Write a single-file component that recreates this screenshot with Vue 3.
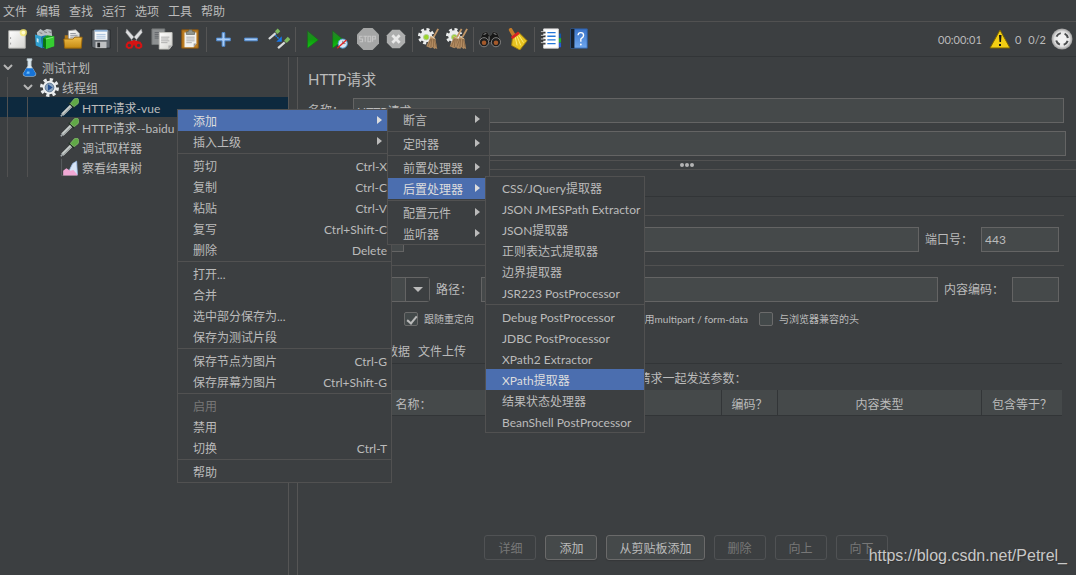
<script setup>
import { ref } from 'vue'

const menus = ['文件', '编辑', '查找', '运行', '选项', '工具', '帮助']

const tools = [
  [['new', '新建'], ['templates', '模板'], ['open', '打开'], ['save', '保存']],
  [['cut', '剪切'], ['copy', '复制'], ['paste', '粘贴']],
  [['plus', '展开'], ['minus', '收起'], ['toggle', '切换']],
  [['start', '启动'], ['start-now', '不停顿启动'], ['stop', '停止'], ['shutdown', '关闭']],
  [['clear', '清除'], ['clear-all', '清除全部']],
  [['search', '查找'], ['reset', '重置查找']],
  [['functions', '函数助手'], ['help', '帮助']],
]

const tree = [
  { label: '测试计划', icon: 'flask', level: 0, open: true },
  { label: '线程组', icon: 'gear', level: 1, open: true },
  { label: 'HTTP请求-vue', icon: 'dropper', level: 2, selected: true },
  { label: 'HTTP请求--baidu', icon: 'dropper', level: 2 },
  { label: '调试取样器', icon: 'dropper', level: 2 },
  { label: '察看结果树', icon: 'chart', level: 2 },
]

const popups = [
  {
    name: 'context',
    groups: [
      [{ label: '添加', sub: true, active: true }, { label: '插入上级', sub: true }],
      [
        { label: '剪切', key: 'Ctrl-X' },
        { label: '复制', key: 'Ctrl-C' },
        { label: '粘贴', key: 'Ctrl-V' },
        { label: '复写', key: 'Ctrl+Shift-C' },
        { label: '删除', key: 'Delete' },
      ],
      [{ label: '打开...' }, { label: '合并' }, { label: '选中部分保存为...' }, { label: '保存为测试片段' }],
      [{ label: '保存节点为图片', key: 'Ctrl-G' }, { label: '保存屏幕为图片', key: 'Ctrl+Shift-G' }],
      [{ label: '启用', disabled: true }, { label: '禁用' }, { label: '切换', key: 'Ctrl-T' }],
      [{ label: '帮助' }],
    ],
  },
  {
    name: 'add',
    groups: [
      [{ label: '断言', sub: true }],
      [{ label: '定时器', sub: true }],
      [{ label: '前置处理器', sub: true }, { label: '后置处理器', sub: true, active: true }],
      [{ label: '配置元件', sub: true }, { label: '监听器', sub: true }],
    ],
  },
  {
    name: 'post',
    groups: [
      [
        { label: 'CSS/JQuery提取器' },
        { label: 'JSON JMESPath Extractor' },
        { label: 'JSON提取器' },
        { label: '正则表达式提取器' },
        { label: '边界提取器' },
        { label: 'JSR223 PostProcessor' },
      ],
      [
        { label: 'Debug PostProcessor' },
        { label: 'JDBC PostProcessor' },
        { label: 'XPath2 Extractor' },
        { label: 'XPath提取器', active: true },
        { label: '结果状态处理器' },
        { label: 'BeanShell PostProcessor' },
      ],
    ],
  },
]

const actions = [
  { label: '详细', disabled: true },
  { label: '添加' },
  { label: '从剪贴板添加' },
  { label: '删除', disabled: true },
  { label: '向上', disabled: true },
  { label: '向下', disabled: true },
]

const name = ref('HTTP请求')
const port = ref('443')
</script>

<template>
  <div class="app">
    <svg class="defs" aria-hidden="true">
      <defs>
        <linearGradient id="paper" x1="0" y1="0" x2="1" y2="1"><stop offset="0" stop-color="#fff" /><stop offset="1" stop-color="#d4d4d0" /></linearGradient>
        <linearGradient id="gold" x1="0" y1="0" x2="0" y2="1"><stop offset="0" stop-color="#f0be4a" /><stop offset="1" stop-color="#c58a12" /></linearGradient>
        <linearGradient id="green" x1="0" y1="0" x2="0" y2="1"><stop offset="0" stop-color="#2f7d32" /><stop offset=".5" stop-color="#109a10" /><stop offset="1" stop-color="#12c812" /></linearGradient>
        <linearGradient id="blue" x1="0" y1="0" x2="0" y2="1"><stop offset="0" stop-color="#3a73c8" /><stop offset="1" stop-color="#6fa8f0" /></linearGradient>
        <radialGradient id="ball"><stop offset="0" stop-color="#fff" /><stop offset=".7" stop-color="#e4e4e4" /><stop offset="1" stop-color="#9a9a9a" /></radialGradient>
        <symbol id="i-new" viewBox="0 0 24 24">
          <path d="M3 3h18v19H3z" fill="url(#paper)" stroke="#b5b5b0" />
          <path d="M5 10v2M5 16v2" stroke="#999" />
          <circle cx="19" cy="5" r="4" fill="#f7e96a" opacity=".75" /><circle cx="19" cy="5" r="2" fill="#fffbd0" />
        </symbol>
        <symbol id="i-templates" viewBox="0 0 24 24">
          <path d="M3 5l4-4 3 2 4-2 5 1 1 8H4z" fill="#b9bfc2" /><path d="M6 5l3 1M11 4l3 1M16 4l3 1" stroke="#777" />
          <path d="M1 7l7 2 1 13-7-3z" fill="#2f9fd0" /><path d="M8 9l5-1v13l-4 1z" fill="#1674a8" />
          <path d="M3 11l2 1v4l-2-1z" fill="#c5e8f5" />
          <path d="M10 11l4-3 8 1v11l-9 3-3-3z" fill="#159c1f" /><path d="M13 11l9-2v11l-9 3z" fill="#35cd31" /><path d="M10 11l3 1v11l-3-3z" fill="#08720f" />
          <path d="M13 12l8-2" stroke="#87e97e" />
        </symbol>
        <symbol id="i-open" viewBox="0 0 24 24">
          <path d="M3 8h6l2 2h10v9H3z" fill="#b37a18" />
          <path d="M7 3l8-1 4 4v8H7z" fill="url(#paper)" stroke="#999" /><path d="M9 6h6M9 8h8M9 10h8" stroke="#8d9299" />
          <path d="M2 12h10l2-2h8l-1 12H3z" fill="url(#gold)" stroke="#98650b" />
        </symbol>
        <symbol id="i-save" viewBox="0 0 24 24">
          <path d="M3 2h19v20H4l-2-2V2z" fill="#646a70" stroke="#25282b" />
          <path d="M5 2h14v11H5z" fill="#f5f8fa" /><path d="M5 2h14v2H5z" fill="#8eb2d8" /><path d="M7 7h10M7 9h10M7 11h10" stroke="#a4c0dc" />
          <path d="M6 15h12v7H6z" fill="#bfc1c3" /><path d="M8 16h3v5H8z" fill="#25282b" />
        </symbol>
        <symbol id="i-cut" viewBox="0 0 24 24">
          <path d="M4 1l11 12-3 3L3 5zM20 1L9 13l3 3 9-11z" fill="#dedfe0" stroke="#8c8f91" stroke-width=".6" />
          <path d="M12 13l-2 1-5 1-2 3 0 3 3 2 4-1 2-4 2 4 4 1 3-2 0-3-2-3-5-1z" fill="#d51313" />
          <circle cx="7" cy="19" r="1.800" fill="#3c3f41" /><circle cx="17" cy="19" r="1.800" fill="#3c3f41" />
        </symbol>
        <symbol id="i-copy" viewBox="0 0 24 24">
          <path d="M1 1h14v17H1z" fill="#8d9091" stroke="#737677" /><path d="M4 5h8M4 7h8M4 9h8M4 11h8" stroke="#62666a" />
          <path d="M9 5h14v14l-3 4H9z" fill="url(#paper)" stroke="#c4c4c0" /><path d="M11 10h9M11 12h8M11 14h9M11 16h7" stroke="#aaa" /><path d="M23 19h-4v4" fill="#aaa" />
        </symbol>
        <symbol id="i-paste" viewBox="0 0 24 24">
          <path d="M3 2h18v20H3z" fill="#bc7c20" stroke="#875410" />
          <path d="M6 5h13v12l-3 4H6z" fill="#f1f1ee" /><path d="M8 10h9M8 12h9M8 14h9M8 16h6" stroke="#aaa" /><path d="M19 17h-3v4" fill="#999" />
          <path d="M8 4h2l1-2h3l1 2h2v3H8z" fill="#92978f" stroke="#585c55" stroke-width=".7" />
        </symbol>
        <symbol id="i-plus" viewBox="0 0 24 24"><path d="M11 5h3v6h6v3h-6v6h-3v-6H5v-3h6z" fill="#a9ccf5" stroke="#4b88d0" /></symbol>
        <symbol id="i-minus" viewBox="0 0 24 24"><path d="M5 11h14v3H5z" fill="#a9ccf5" stroke="#4b88d0" /></symbol>
        <symbol id="i-toggle" viewBox="0 0 24 24">
          <path d="M1 12l8-7M11 22l8-7" stroke="#d7dada" stroke-width="2.500" /><path d="M7 4l3 3M17 14l3 3" stroke="#303435" />
          <path d="M9 5l3-3M19 15l4-4" stroke="#7cba5e" stroke-width="4" />
          <path d="M8 8l6 6" stroke="#1983ee" stroke-width="1.500" stroke-dasharray="2 1" /><path d="M15 9v6H9z" fill="#1777eb" />
        </symbol>
        <symbol id="i-start" viewBox="0 0 24 24"><path d="M7 3l12 10-12 9z" fill="url(#green)" stroke="#17671b" stroke-width=".7" /></symbol>
        <symbol id="i-start-now" viewBox="0 0 24 24">
          <path d="M4 3l12 10-12 9z" fill="url(#green)" stroke="#17671b" stroke-width=".7" />
          <circle cx="15" cy="17" r="5" fill="#d7e8f5" stroke="#4d9bd4" /><path d="M15 14v3h3" fill="none" stroke="#777" /><path d="M9 22l10-9" stroke="#e02525" stroke-width="1.500" />
        </symbol>
        <symbol id="i-stop" viewBox="0 0 24 24">
          <path d="M7 0h10l7 7v10l-7 7H7l-7-7V7z" fill="#a5a6a6" />
          <g fill="none" stroke="#c6c6c6" stroke-width="1.200"><path d="M6 9H3v3h3v3H3M7 9h4M9 9v6M12 9h3v6h-3zM17 15V9h3v3h-3" /></g>
        </symbol>
        <symbol id="i-shutdown" viewBox="0 0 24 24"><path d="M8 2h8l6 6v8l-6 6H8l-6-6V8z" fill="#adaeae" /><path d="M8 8l8 8M16 8l-8 8" stroke="#e9e9e9" stroke-width="3" /></symbol>
        <symbol id="i-gear" viewBox="0 0 24 24">
          <circle cx="12" cy="12" r="10" fill="none" stroke="#e8eaeb" stroke-width="4" stroke-dasharray="4 3.85" />
          <circle cx="12" cy="12" r="8.5" fill="#eef0f1" /><circle cx="12" cy="12" r="5.5" fill="#8ca4bd" stroke="#4c6787" /><path d="M10 8l6 4-6 4z" fill="#254f91" />
        </symbol>
        <symbol id="sweeper" viewBox="0 0 24 24">
          <path d="M22 1l-5 9" stroke="#c19667" stroke-width="2" /><path d="M14 9l5 3 2 11-2-1-1 1-2-2-2 1-5-2z" fill="#b28b61" />
          <path d="M14 12l-3 8M15 12l-1 9M17 12v9M18 12l2 9" stroke="#735536" stroke-width=".6" /><path d="M13 9l6 3" stroke="#e2be8d" />
        </symbol>
        <symbol id="cog" viewBox="0 0 24 24">
          <circle cx="9" cy="9" r="7.5" fill="none" stroke="#eceeee" stroke-width="3" stroke-dasharray="3.300 2.590" /><circle cx="9" cy="9" r="6.5" fill="#eceeee" /><circle cx="9" cy="10" r="3" fill="#9ad62c" stroke="#b5c8a0" />
        </symbol>
        <symbol id="i-clear" viewBox="0 0 24 24"><use href="#cog" /><use href="#sweeper" /></symbol>
        <symbol id="i-clear-all" viewBox="0 0 24 24"><use href="#cog" /><use href="#sweeper" x="-5" width="24" height="24" /><use href="#sweeper" x="1" width="24" height="24" /></symbol>
        <symbol id="i-search" viewBox="0 0 24 24">
          <path d="M4 5l5-1 2 4h2l2-4 5 1 4 10-5 5-5-4h-4l-5 4-5-5z" fill="#171717" stroke="#555" stroke-width=".7" /><path d="M5 7l3-1M16 6l3 1M11 9v5" stroke="#999" />
          <circle cx="5.500" cy="15.500" r="5" fill="#202020" stroke="#888" /><circle cx="18.500" cy="15.500" r="5" fill="#202020" stroke="#888" />
          <circle cx="5.500" cy="16" r="2.500" fill="#a65a2b" /><circle cx="18.500" cy="16" r="2.500" fill="#a65a2b" />
        </symbol>
        <symbol id="i-reset" viewBox="0 0 24 24">
          <path d="M4 2l4 7" stroke="#c47b2a" stroke-width="4" stroke-linecap="round" /><path d="M6 10l7-5 9 9-8 10-9-5z" fill="#e7c320" stroke="#9e7d0c" />
          <path d="M9 10l2 9M11 9l4 10M13 8l5 8" stroke="#fff07c" /><path d="M5 11l8-6" stroke="#d62424" stroke-width="3" />
        </symbol>
        <symbol id="i-functions" viewBox="0 0 24 24">
          <path d="M18 6h5v5h-5z" fill="#1557a3" /><path d="M18 11h5v5h-5z" fill="#21ad32" /><path d="M18 16h5v5h-5z" fill="#235cd5" />
          <path d="M4 1h16v21H4z" fill="#fff" stroke="#ddd" /><path d="M8 5h9M8 9h9M8 13h9M8 17h9" stroke="#2376d9" stroke-width="1.4" />
          <path d="M1 5h5M1 9h5M1 13h5M1 17h5" stroke="#333" stroke-width="2" /><path d="M1 4h4M1 8h4M1 12h4M1 16h4" stroke="#ccc" />
        </symbol>
        <symbol id="i-help" viewBox="0 0 24 24">
          <path d="M3 1h18v21H3z" fill="url(#blue)" stroke="#2e5fa5" /><path d="M3 1h4v21H3z" fill="#17202c" />
          <path d="M11 8q0-3 3-3t3 3q0 2-2 3l-1 1v3" fill="none" stroke="#fff" stroke-width="1.5" /><circle cx="14" cy="18" r="1" fill="#fff" />
        </symbol>
        <symbol id="i-flask" viewBox="0 0 24 24">
          <path d="M9 1h6v2l-1 1v6l6 10q0 3-3 3H7q-3 0-3-3l6-10V4L9 3z" fill="#dce7ed" stroke="#b9c7cf" /><path d="M8 13h8l4 7q0 2-3 3H7q-3-1-3-3z" fill="#1773d6" /><path d="M9 17h3v3H8z" fill="#6dbbfa" />
        </symbol>
        <symbol id="i-dropper" viewBox="0 0 24 24">
          <path d="M3 21L15 9" stroke="#c9cfcd" stroke-width="4" /><path d="M4 21L15 10" stroke="#8d9593" stroke-width="1.200" /><path d="M1 23l3-3" stroke="#a5acae" stroke-width="2" />
          <path d="M11 6l7 7" stroke="#1f3021" stroke-width="1.500" /><path d="M13 7l5-6 4-1 2 3-1 4-5 4z" fill="#60a947" stroke="#9ad17d" stroke-width=".7" />
        </symbol>
        <symbol id="i-chart" viewBox="0 0 24 24">
          <path d="M2 1v21h20" fill="none" stroke="#626567" /><path d="M12 15l4-8 5-3 1 17-9-1z" fill="#d8e5f7" stroke="#9dbfed" /><path d="M4 16l4-3 5 3 4-1 5 6v1H4z" fill="#f0a8d4" />
        </symbol>
      </defs>
    </svg>

    <nav class="menubar" aria-label="主菜单">
      <button v-for="m in menus" :key="m" type="button">{{ m }}</button>
    </nav>

    <header class="toolbar">
      <div v-for="(group, g) in tools" :key="g" class="tool-group">
        <button v-for="t in group" :key="t[0]" type="button" :aria-label="t[1]">
          <svg><use :href="'#i-' + t[0]" /></svg>
        </button>
      </div>
      <div class="status">
        <span>00:00:01</span>
        <svg class="warn" viewBox="0 0 22 20">
          <path d="M11 1l10 18H1z" fill="#f4cf13" stroke="#7d6500" stroke-linejoin="round" /><path d="M10 6h2.500l-.5 7h-1.500zM10 15h2v2h-2z" fill="#151515" />
        </svg>
        <span class="errors">0</span>
        <span class="threads">0/2</span>
        <svg class="wheel" viewBox="0 0 22 22">
          <circle cx="11" cy="11" r="10.500" fill="url(#ball)" /><circle cx="11" cy="11" r="6" fill="none" stroke="#4b4d4e" stroke-width="2" stroke-dasharray="5.400 4.025" stroke-dashoffset="-2" /><circle cx="11" cy="11" r="4" fill="#f2f2f2" />
        </svg>
      </div>
    </header>

    <div class="body">
      <aside class="tree">
        <ul>
          <li v-for="n in tree" :key="n.label" :class="['level' + n.level, { selected: n.selected }]">
            <i v-for="l in n.level" :key="l" class="guide"></i>
            <svg v-if="n.open" class="chevron" viewBox="0 0 10 6"><path d="M1 1l4 4 4-4" /></svg>
            <svg class="node"><use :href="'#i-' + n.icon" /></svg>
            <span>{{ n.label }}</span>
          </li>
        </ul>
      </aside>

      <main class="main">
        <h1>HTTP请求</h1>
        <div class="row name-row"><label for="name">名称：</label><input id="name" v-model="name" class="grow" type="text" /></div>
        <div class="row note-row"><label for="note">注释：</label><input id="note" class="grow" type="text" /></div>
        <div class="splitter"><i></i><i></i><i></i></div>
        <div class="tabs"><button type="button">基本</button><button type="button">高级</button></div>

        <section class="form">
          <h2>Web服务器</h2>
          <div class="row">
            <label for="protocol">协议：</label><input id="protocol" class="protocol" type="text" />
            <label for="server">服务器名称或IP：</label><input id="server" class="grow" type="text" />
            <label for="port" class="after">端口号：</label><input id="port" v-model="port" class="port" type="text" />
          </div>
          <h2>HTTP请求</h2>
          <div class="row">
            <span class="combo"><select id="method" aria-label="方法"><option>GET</option><option>POST</option></select></span>
            <label for="path" class="path">路径：</label><input id="path" class="grow" type="text" />
            <label for="encoding" class="after">内容编码：</label><input id="encoding" class="encoding" type="text" />
          </div>
          <div class="checks">
            <label><input type="checkbox" />自动重定向</label>
            <label><input type="checkbox" checked />跟随重定向</label>
            <label><input type="checkbox" checked />KeepAlive</label>
            <label class="end"><input type="checkbox" />对POST使用multipart / form-data</label>
            <label><input type="checkbox" />与浏览器兼容的头</label>
          </div>
        </section>

        <div class="tabs body-tabs"><button type="button">参数</button><button type="button">消息体数据</button><button type="button">文件上传</button></div>
        <div class="params">
          <p>同请求一起发送参数：</p>
          <table>
            <colgroup><col class="c-name" /><col /><col class="c-enc" /><col class="c-type" /><col class="c-eq" /></colgroup>
            <thead><tr><th>名称：</th><th>值</th><th>编码？</th><th>内容类型</th><th>包含等于？</th></tr></thead>
          </table>
        </div>
        <footer><button v-for="a in actions" :key="a.label" type="button" :disabled="a.disabled">{{ a.label }}</button></footer>
      </main>
    </div>

    <div v-for="p in popups" :key="p.name" :class="['popup', p.name]" role="menu">
      <div v-for="(g, i) in p.groups" :key="i" class="popup-group">
        <button v-for="item in g" :key="item.label" type="button" role="menuitem" :disabled="item.disabled" :class="{ active: item.active }">
          <span>{{ item.label }}</span>
          <kbd v-if="item.key">{{ item.key }}</kbd>
          <i v-if="item.sub" class="arrow"></i>
        </button>
      </div>
    </div>
    <div class="watermark">https://blog.csdn.net/Petrel_</div>
  </div>
</template>

<style>
body { margin: 0; background: #3c3f41; }
</style>

<style scoped>
.app {
  position: relative;
  display: flex;
  flex-direction: column;
  min-height: 100vh;
  overflow: hidden;
  background: #3c3f41;
  color: #bbb;
  font: 12px/20px Lato, "Noto Sans CJK SC", sans-serif;
}
.app * { box-sizing: border-box; }
button, input, select, kbd { font: inherit; color: inherit; }
button { padding: 0; border: 0; background: none; white-space: nowrap; }
label, span { white-space: nowrap; }
.defs { position: absolute; width: 0; height: 0; }

.menubar { display: flex; gap: 9px; height: 22px; padding: 2px 3px 0; border-bottom: 1px solid #515151; }
.toolbar { display: flex; align-items: center; height: 35px; padding-left: 3px; border-bottom: 1px solid #323537; }
.tool-group { display: flex; }
.tool-group + .tool-group { margin-left: 2px; padding-left: 2px; border-left: 1px solid #555; }
.tool-group button { display: flex; align-items: center; justify-content: center; width: 28px; height: 25px; }
.tool-group svg { width: 22px; height: 22px; }
.status { display: flex; align-items: center; margin-left: auto; padding-right: 3px; font-size: 11px; }
.status span { padding-top: 2px; }
.warn { width: 22px; height: 20px; margin-left: 7px; }
.errors { margin-left: 4px; }
.threads { margin-left: 7px; }
.wheel { width: 22px; height: 22px; margin-left: 5px; }

.body { display: flex; flex: 1; }
.tree { flex: none; width: 289px; border-right: 1px solid #555; }
.tree ul { margin: 0; padding: 0; list-style: none; }
.tree li { position: relative; display: flex; align-items: center; height: 20px; padding-left: 20px; }
.tree li.level1 { padding-left: 40px; }
.tree li.level2 { padding-left: 60px; }
.tree li.selected { background: #0d293e; }
.tree li span { padding-top: 3px; }
.guide { position: absolute; top: 0; bottom: 0; left: 7px; width: 1px; background: #515151; }
.guide + .guide { left: 27px; }
.chevron { position: absolute; left: 3px; top: 7px; width: 10px; height: 6px; fill: none; stroke: #b5b5b5; stroke-width: 2; }
.level1 .chevron { left: 23px; }
.node { flex: none; width: 19px; height: 19px; margin-right: 3px; }

.main { display: flex; flex: 1; flex-direction: column; min-width: 0; margin-left: 8px; border-left: 1px solid #555; }
h1 { margin: 0; height: 41px; padding-left: 10px; font-size: 15px; font-weight: 400; line-height: 44px; }
.row { display: flex; align-items: center; height: 25px; }
.row label { padding-top: 1px; }
.name-row, .note-row { padding: 0 12px 0 10px; }
.name-row label, .note-row label { width: 45px; }
.note-row { margin-top: 8px; padding-right: 10px; }
input[type="text"] { height: 25px; min-width: 0; padding: 0 3px; border: 1px solid #646464; background: #45494a; outline: 0; }
.grow { flex: 1; }
.splitter { display: flex; align-items: center; justify-content: center; gap: 1px; height: 10px; margin-top: 4px; border-top: 1px solid #515151; border-bottom: 1px solid #515151; }
.splitter i { width: 4px; height: 4px; border-radius: 50%; background: #b4b4b4; }
.tabs { display: flex; gap: 8px; height: 27px; padding-left: 8px; border-bottom: 1px solid #323537; }
.form { padding: 8px 17px 0 6px; }
h2 { display: flex; align-items: center; gap: 4px; height: 20px; margin: 0 -5px 2px 0; font-size: 12px; font-weight: 400; }
h2::after { content: ""; flex: 1; height: 1px; background: #515151; }
h2:not(:first-child) { margin-top: 3px; }
.protocol { width: 64px; margin-right: 6px; }
.after { margin-left: 6px; margin-right: 8px; }
.port { width: 78px; }
.encoding { width: 47px; }
.combo { position: relative; width: 126px; height: 25px; }
.combo select { width: 100%; height: 25px; padding: 0 4px; appearance: none; border: 1px solid #646464; border-radius: 3px; background: #45494a; }
.combo::after { content: ""; position: absolute; top: 1px; right: 1px; width: 23px; height: 23px; border-left: 1px solid #646464; background: #3c3f41; pointer-events: none; }
.combo::before { content: ""; position: absolute; z-index: 1; top: 10px; right: 7px; border: 5px solid transparent; border-top-color: #bbb; border-bottom: 0; pointer-events: none; }
.path { width: 51px; padding-left: 6px; }
.checks { display: grid; grid-template-columns: 100px 94px 72px 178px auto; height: 34px; font-size: 10px; }
.checks label { display: flex; align-items: center; gap: 6px; }
.checks label.end { justify-content: flex-end; }
.checks label:last-child { padding-left: 11px; }
.checks input { position: relative; flex: none; width: 14px; height: 14px; margin: 0; appearance: none; border: 1px solid #6b6b6b; border-radius: 2px; background: #43494a; }
.checks input:checked::after { content: ""; position: absolute; left: 4px; top: 1px; width: 4px; height: 8px; border: solid #bbb; border-width: 0 2px 2px 0; transform: rotate(40deg); }
.body-tabs { height: 28px; margin: 0 14px 0 6px; padding: 4px 0 0 14px; align-items: center; }
.params { flex: 1; margin: 0 14px 0 6px; }
.params p { height: 26px; margin: 0; padding-left: 7px; line-height: 29px; text-align: center; }
table { width: 100%; border-collapse: separate; border-spacing: 0; table-layout: fixed; }
th { height: 26px; padding: 4px 0 0; border-right: 1px solid #323537; border-bottom: 1px solid #323537; background: #45494a; font-weight: 400; }
th:last-child { border-right: 0; }
.c-name { width: 220px; }
.c-enc { width: 56px; }
.c-type { width: 204px; }
.c-eq { width: 80px; }
footer { display: flex; justify-content: center; gap: 9px; padding: 0 2px 15px 0; }
footer button { height: 25px; min-width: 52px; padding: 2px 12px 0; border: 1px solid #6a6a6a; border-radius: 3px; background: #45494a; box-shadow: 0 1px 1px #353739; }
footer button:disabled { border-color: #505254; background: none; box-shadow: none; color: #777; }

.popup { position: absolute; border: 1px solid #515151; background: #3c3f41; }
.context { left: 177px; top: 109px; width: 215px; }
.add { left: 387px; top: 108px; width: 103px; }
.post { left: 485px; top: 176px; width: 160px; }
.popup-group + .popup-group { padding-top: 3px; background: linear-gradient(#515151, #515151) 0 1px / 100% 1px no-repeat; }
.popup button { display: flex; align-items: center; width: 100%; height: 21px; padding: 2px 4px 0 15px; }
.post button { padding-left: 16px; }
.popup button.active { background: #4b6eaf; color: #ddd; }
.popup button:disabled { color: #777; }
.popup kbd { margin-left: auto; }
.arrow { margin: 0 5px 4px auto; border: 4px solid transparent; border-left: 5px solid #bbb; border-right: 0; }
.active .arrow { border-left-color: #ddd; }
.watermark { position: absolute; right: 9px; bottom: 9px; color: #c8c8c8; font: 16px/20px "Liberation Sans", sans-serif; text-shadow: 1px 1px 1px #333; }
</style>
